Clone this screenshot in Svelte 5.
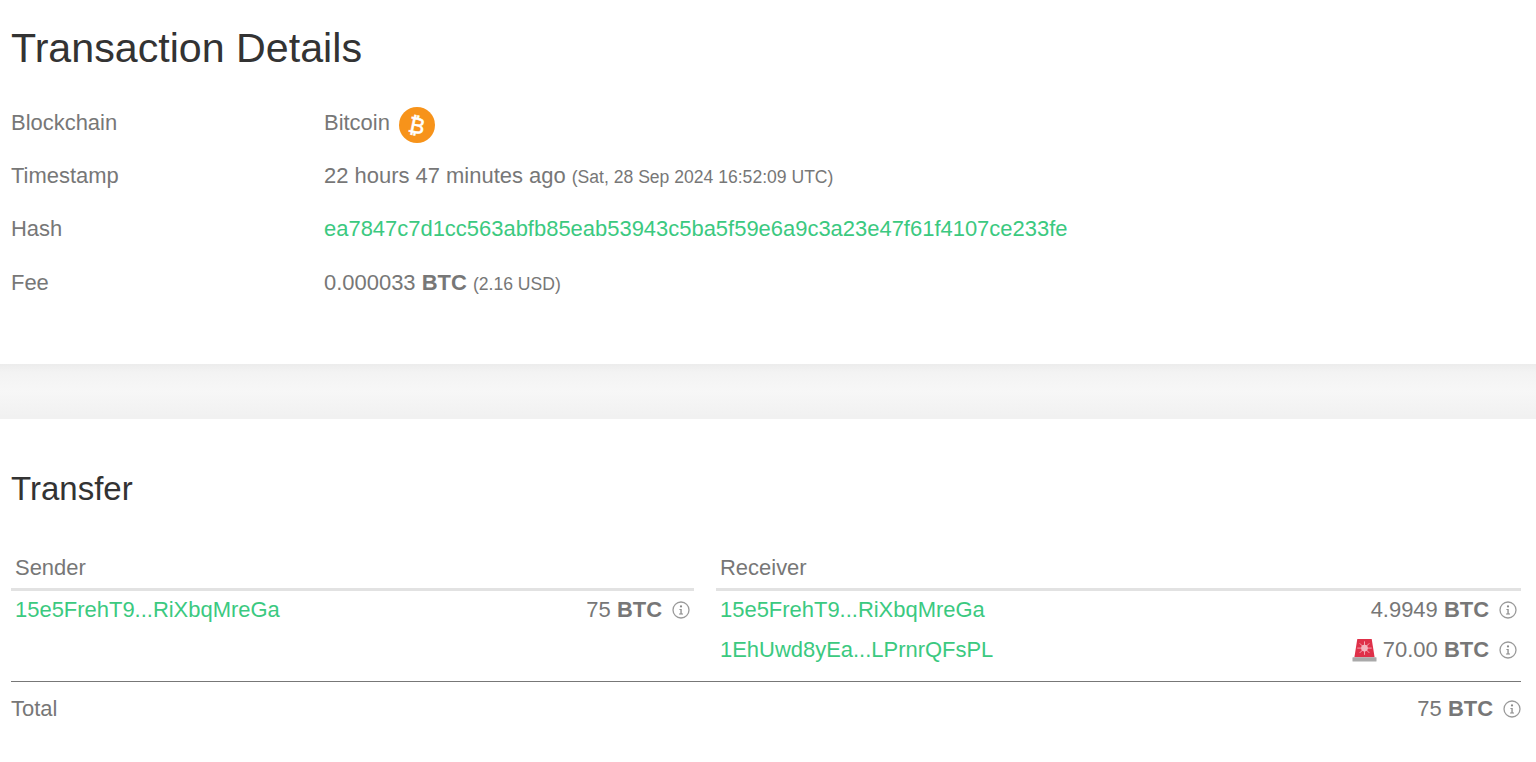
<script>
  const details = [
    { label: 'Blockchain', kind: 'chain' },
    { label: 'Timestamp', kind: 'time' },
    { label: 'Hash', kind: 'hash' },
    { label: 'Fee', kind: 'fee' }
  ];
</script>

{#snippet info()}
  <svg class="info" viewBox="0 0 18 18" aria-hidden="true">
    <circle cx="9" cy="9" r="8" fill="none" stroke="#9a9a9a" stroke-width="1.3" />
    <circle cx="9" cy="5.4" r="1.1" fill="#8a8a8a" />
    <path d="M7.3 7.9H9.7V12.6H11V13.5H7.1V12.6H8.4V8.8H7.3Z" fill="#8a8a8a" />
  </svg>
{/snippet}

<main>
  <section class="top">
    <h1>Transaction Details</h1>
    <div class="details">
      {#each details as d}
        <div class="label">{d.label}</div>
        <div class="value">
          {#if d.kind === 'chain'}
            Bitcoin <svg class="coin" viewBox="0 0 36 36" aria-hidden="true">
              <circle cx="18" cy="18" r="18" fill="#f7931a" />
              <text x="18" y="26" text-anchor="middle" class="btc" transform="rotate(12 18 18)">₿</text>
            </svg>
          {:else if d.kind === 'time'}
            22 hours 47 minutes ago <small>(Sat, 28 Sep 2024 16:52:09 UTC)</small>
          {:else if d.kind === 'hash'}
            <a href="#hash">ea7847c7d1cc563abfb85eab53943c5ba5f59e6a9c3a23e47f61f4107ce233fe</a>
          {:else}
            0.000033 <b>BTC</b> <small>(2.16 USD)</small>
          {/if}
        </div>
      {/each}
    </div>
  </section>

  <div class="band"></div>

  <section class="transfer">
    <h2>Transfer</h2>
    <div class="cols">
      <div class="col">
        <div class="head">Sender</div>
        <div class="row first">
          <a href="#a">15e5FrehT9...RiXbqMreGa</a>
          <span class="amt"><span>75 <b>BTC</b></span>{@render info()}</span>
        </div>
      </div>
      <div class="col">
        <div class="head">Receiver</div>
        <div class="row first">
          <a href="#a">15e5FrehT9...RiXbqMreGa</a>
          <span class="amt"><span>4.9949 <b>BTC</b></span>{@render info()}</span>
        </div>
        <div class="row">
          <a href="#b">1EhUwd8yEa...LPrnrQFsPL</a>
          <span class="amt">
            <svg class="siren" viewBox="0 0 26 26" aria-hidden="true">
              <path d="M5.500 1H20.500L23.500 20H2.500Z" fill="#df3049" />
              <rect x="0.5" y="20" width="25" height="4.5" rx="0.6" fill="#a9a9a9" />
              <g stroke="#f3a9b5" stroke-width="1">
                <path d="M13 3.500V17.500M5.500 10.500H20.500M8 5.500L18 15.500M18 5.500L8 15.500" />
              </g>
              <circle cx="13" cy="10.500" r="3.500" fill="#f4b4be" />
            </svg>
            <span>70.00 <b>BTC</b></span>{@render info()}
          </span>
        </div>
      </div>
    </div>
    <div class="total">
      <span>Total</span>
      <span class="amt"><span>75 <b>BTC</b></span>{@render info()}</span>
    </div>
  </section>
</main>

<style>
  :global(body) {
    margin: 0;
    background: #fff;
  }
  main {
    font-family: "Liberation Sans", Arial, sans-serif;
    font-size: 21.96px;
    color: #777;
    height: 762px;
    overflow: hidden;
  }
  a {
    color: #3bc980;
    text-decoration: none;
  }
  b {
    font-weight: 700;
  }
  small {
    font-size: 17.57px;
  }
  .top {
    height: 364px;
    padding: 0 11px;
    box-sizing: border-box;
  }
  h1 {
    margin: 0;
    padding-top: 25px;
    font-size: 41.2px;
    line-height: 46px;
    font-weight: 400;
    color: #333;
  }
  .details {
    display: grid;
    grid-template-columns: 313px 1fr;
    grid-auto-rows: 53.33px;
    margin-top: 25px;
    align-items: center;
  }
  .value {
    white-space: nowrap;
  }
  .coin {
    width: 36px;
    height: 36px;
    margin: -8px 0 -8px 3px;
    vertical-align: -5px;
  }
  .btc {
    font-family: "DejaVu Sans", sans-serif;
    font-size: 22px;
    font-weight: 400;
    fill: #fff;
    stroke: #fff;
    stroke-width: 0.5px;
  }
  .band {
    height: 55px;
    background: linear-gradient(#ececec, #f3f3f3 15%, #f7f7f7 50%, #f1f1f1 95%);
  }
  .transfer {
    padding: 0 15px 0 11px;
  }
  h2 {
    margin: 0;
    padding-top: 48px;
    font-size: 33px;
    line-height: 44px;
    font-weight: 400;
    color: #333;
  }
  .cols {
    display: grid;
    grid-template-columns: 683px 805px;
    gap: 22px;
    margin-top: 39px;
  }
  .head {
    padding: 0 4px;
    height: 38px;
    line-height: 36px;
    border-bottom: 3px solid #e2e2e2;
  }
  .row {
    display: flex;
    justify-content: space-between;
    align-items: center;
    height: 40px;
    padding: 0 4px;
    box-sizing: border-box;
  }
  .row.first {
    height: 39px;
    padding-bottom: 2px;
  }
  .amt {
    display: inline-flex;
    align-items: center;
    white-space: nowrap;
  }
  .info {
    width: 18px;
    height: 18px;
    margin-left: 10px;
  }
  .siren {
    width: 25px;
    height: 25px;
    margin-right: 6px;
  }
  .total {
    display: flex;
    justify-content: space-between;
    align-items: center;
    margin-top: 11px;
    border-top: 1px solid #777;
    height: 54px;
  }
</style>
